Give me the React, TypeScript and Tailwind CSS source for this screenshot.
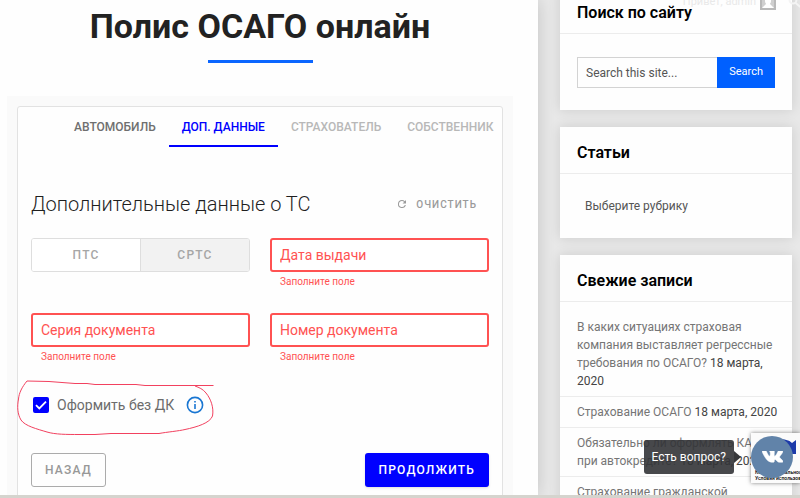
import { useState } from 'react'
import type { ReactNode } from 'react'

interface TabDef {
  id: string
  label: string
  disabled: boolean
}

const TABS: TabDef[] = [
  { id: 'car', label: 'Автомобиль', disabled: false },
  { id: 'extra', label: 'Доп. данные', disabled: false },
  { id: 'insurer', label: 'Страхователь', disabled: true },
  { id: 'owner', label: 'Собственник', disabled: true },
]

interface Post {
  title: string
  date: string
}

const POSTS: Post[] = [
  {
    title:
      'В каких ситуациях страховая компания выставляет регрессные требования по ОСАГО?',
    date: '18 марта, 2020',
  },
  { title: 'Страхование ОСАГО', date: '18 марта, 2020' },
  {
    title: 'Обязательно ли оформлять КАСКО при автокредите?',
    date: '18 марта, 2020',
  },
  { title: 'Страхование гражданской ответственности', date: '18 марта, 2020' },
]

function Field({ id, label }: { id: string; label: string }) {
  return (
    <div>
      <input
        id={id}
        aria-label={label}
        aria-describedby={`${id}-error`}
        placeholder={label}
        className="block h-[34px] w-full rounded-[3px] border-2 border-[#ff5252] bg-white px-2 text-sm text-[#ff5252] outline-none placeholder:text-[#ff5252]"
      />
      <p
        id={`${id}-error`}
        className="mt-1 px-2.5 text-[10px] leading-3 text-[#ff5252]"
      >
        Заполните поле
      </p>
    </div>
  )
}

function Widget({ title, children }: { title: string; children: ReactNode }) {
  return (
    <section className="bg-[#fefefe] shadow-[0_0_12px_rgba(0,0,0,0.12)]">
      <h2 className="border-b border-[#ececec] px-[17px] pt-3.5 pb-2 text-base leading-6 font-semibold text-black">
        {title}
      </h2>
      {children}
    </section>
  )
}

function Tabs() {
  const [active, setActive] = useState('extra')

  return (
    <div role="tablist" className="flex overflow-hidden pl-[43px]">
      {TABS.map((t) => {
        const isActive = active === t.id
        return (
          <button
            key={t.id}
            type="button"
            role="tab"
            aria-selected={isActive}
            disabled={t.disabled}
            onClick={() => setActive(t.id)}
            className={`h-10 shrink-0 border-b-2 px-[13px] pt-0.5 text-xs font-medium uppercase ${
              isActive
                ? 'border-[#0000ff] text-[#0000ff]'
                : t.disabled
                  ? 'border-transparent text-[#b8b8b8]'
                  : 'border-transparent text-[#6f6f6f]'
            }`}
          >
            {t.label}
          </button>
        )
      })}
    </div>
  )
}

function PolicyForm() {
  const [doc, setDoc] = useState('sts')
  const [noCard, setNoCard] = useState(true)

  return (
    <form
      className="min-h-[420px] rounded-[3px] border border-[#e2e2e2] bg-[#fefefe]"
      onSubmit={(e) => e.preventDefault()}
    >
      <Tabs />

      <div className="px-[13px]">
        <div className="mt-[45px] flex items-center justify-between pr-3">
          <h2 className="text-xl leading-6 font-light text-[#1f1f1f]">
            Дополнительные данные о ТС
          </h2>
          <button
            type="button"
            className="flex items-center gap-2 text-[10px] font-medium tracking-widest text-[#9a9a9a] uppercase"
          >
            <svg viewBox="0 0 24 24" className="size-3" aria-hidden>
              <path
                fill="currentColor"
                d="M17.65 6.35A7.96 7.96 0 0 0 12 4a8 8 0 1 0 7.73 10h-2.08A6 6 0 1 1 12 6c1.66 0 3.14.69 4.22 1.78L13 11h7V4z"
              />
            </svg>
            Очистить
          </button>
        </div>

        <div className="mt-[22px] grid grid-cols-2 gap-x-5 gap-y-[25px]">
          <div
            role="group"
            aria-label="Тип документа"
            className="flex h-[34px] overflow-hidden rounded-[3px] border border-[#dedede]"
          >
            <button
              type="button"
              aria-pressed={doc === 'pts'}
              onClick={() => setDoc('pts')}
              className={`flex-1 text-xs font-medium tracking-widest text-[#a6a6a6] ${
                doc === 'pts' ? 'bg-[#f2f2f2]' : 'bg-white'
              }`}
            >
              ПТС
            </button>
            <button
              type="button"
              aria-pressed={doc === 'sts'}
              onClick={() => setDoc('sts')}
              className={`flex-1 border-l border-[#dedede] text-xs font-medium tracking-widest text-[#a6a6a6] ${
                doc === 'sts' ? 'bg-[#f2f2f2]' : 'bg-white'
              }`}
            >
              СРТС
            </button>
          </div>
          <Field id="issued" label="Дата выдачи" />
          <Field id="series" label="Серия документа" />
          <Field id="number" label="Номер документа" />
        </div>

        <div className="relative mt-[30px] flex items-center gap-3">
          <label className="flex h-6 items-center gap-2 pl-0.5 text-sm text-[#6c6c6c]">
            <span className="relative flex size-4">
              <input
                type="checkbox"
                checked={noCard}
                onChange={(e) => setNoCard(e.target.checked)}
                className="size-4 appearance-none rounded-[2px] border-2 border-[#0000ff] checked:bg-[#0000ff]"
              />
              {noCard && (
                <svg
                  viewBox="0 0 16 16"
                  className="pointer-events-none absolute inset-0"
                  aria-hidden
                >
                  <path
                    d="M3 8.2 6.3 11.5 13 4.6"
                    fill="none"
                    stroke="#fff"
                    strokeWidth="1.8"
                  />
                </svg>
              )}
            </span>
            Оформить без ДК
          </label>
          <button type="button" aria-label="Подробнее">
            <svg viewBox="0 0 18 18" className="size-[18px]" aria-hidden>
              <circle
                cx="9"
                cy="9"
                r="7.6"
                fill="none"
                stroke="#1976d2"
                strokeWidth="1.6"
              />
              <path d="M8.2 8h1.6v5H8.2zM8.2 5h1.6v1.6H8.2z" fill="#1976d2" />
            </svg>
          </button>
          {/* hand-drawn marker loop around the option */}
          <svg
            viewBox="0 0 198 56"
            className="pointer-events-none absolute -top-[13px] -left-[14px] h-14 w-[198px]"
            aria-hidden
          >
            <path
              d="M196.5 5.5H128L119 4.5H78L70 3.5H58L32 1.5 10 1C5 7 2 13 1.5 19 0 27 .5 34 4 40 8 46 20 49 30 52 38 54.5 50 54.5 62 54.5H78L94 53.5H142C150 52 162 51 168 49.5 180 47 193 43 195.5 36 197 28 194 19 189 13 186 9 182 7.5 178 6"
              fill="none"
              stroke="#f2415f"
              strokeWidth="1"
            />
          </svg>
        </div>

        <div className="mt-9 flex justify-between">
          <button
            type="button"
            className="h-[34px] rounded-[3px] border border-[#ababab] px-[13px] text-xs font-medium tracking-widest text-[#989898] uppercase"
          >
            Назад
          </button>
          <button
            type="submit"
            className="h-[34px] rounded-[3px] bg-[#0000ff] px-3.5 text-xs font-medium tracking-widest text-white uppercase shadow"
          >
            Продолжить
          </button>
        </div>
      </div>
    </form>
  )
}

function Sidebar() {
  return (
    <aside className="-mt-[13px] w-[232px] shrink-0 space-y-[17px]">
      <Widget title="Поиск по сайту">
        <form
          className="flex px-[17px] pt-[23px] pb-[22px]"
          onSubmit={(e) => e.preventDefault()}
        >
          <input
            type="search"
            aria-label="Поиск по сайту"
            placeholder="Search this site..."
            className="h-[31px] min-w-0 flex-1 border border-r-0 border-[#d3d3d3] px-2 text-xs text-[#555] outline-none placeholder:text-[#555]"
          />
          <button
            type="submit"
            className="h-[31px] bg-[#0060ff] px-3 text-[11px] text-white"
          >
            Search
          </button>
        </form>
      </Widget>

      <Widget title="Статьи">
        <div className="px-[17px] py-5">
          <select
            aria-label="Статьи"
            className="block h-6 w-full appearance-none bg-transparent pl-2 text-xs text-[#555]"
          >
            <option>Выберите рубрику</option>
          </select>
        </div>
      </Widget>

      <Widget title="Свежие записи">
        <ul className="pt-2.5">
          {POSTS.map((p) => (
            <li
              key={p.title}
              className="border-b border-[#ececec] py-1.5 pr-3 pl-[17px] text-xs leading-[18px] text-[#444]"
            >
              <a href="#post" className="text-[#757575]">
                {p.title}
              </a>{' '}
              {p.date}
            </li>
          ))}
        </ul>
      </Widget>
    </aside>
  )
}

function AdminBar() {
  return (
    <div className="absolute -top-1.5 right-0 flex h-4 items-center gap-1 text-[#e9e9e9]">
      <span className="text-[11px] leading-4">Привет, admin</span>
      <svg viewBox="0 0 16 16" className="size-4" aria-hidden>
        <path d="M0 0h16v16H0z" fill="#b9b9b9" />
        <path d="M2 1h12v13H2z" fill="#cfcfcf" />
        <path
          d="M5 3a3 3 0 0 1 6 0v4c0 2-1 2-1 3l4 4H2l4-4c0-1-1-1-1-3z"
          fill="#fff"
        />
      </svg>
      <svg viewBox="0 0 12 16" className="ml-2 h-4 w-3" aria-hidden>
        <circle cx="5" cy="6" r="3.5" fill="none" stroke="#f4f4f4" strokeWidth="2" />
        <path d="m7.5 9 5 4" stroke="#f4f4f4" strokeWidth="2" />
      </svg>
    </div>
  )
}

function ChatWidget() {
  return (
    <>
      <div className="absolute right-0 bottom-[15px] h-[50px] w-[49px] overflow-hidden bg-[#fbfbfb] shadow-[0_0_4px_rgba(0,0,0,0.5)]">
        <svg viewBox="0 0 49 50" className="absolute inset-0" aria-hidden>
          <path
            d="M26 6c8 0 12 1 15 4l4-3v14H32l4-4c-3-4-6-5-10-5z"
            fill="#1c3aa9"
          />
        </svg>
        <div className="absolute bottom-0.5 left-1 text-[5px] leading-[6px] font-medium whitespace-nowrap text-black">
          <p>Конфиденциальность</p>
          <p>Условия использования</p>
        </div>
      </div>
      <div className="absolute right-[7px] bottom-5 flex items-center">
        <div className="rounded-[3px] bg-[#333437]/90 px-2 py-[9px] text-xs leading-4 text-white">
          Есть вопрос?
        </div>
        <svg viewBox="0 0 7 12" className="mr-2.5 h-3 w-[7px]" aria-hidden>
          <path d="M0 0 7 6 0 12z" fill="#37383b" />
        </svg>
        <button
          type="button"
          aria-label="ВКонтакте"
          className="flex size-[42px] items-center justify-center rounded-full bg-[#6183a9]"
        >
          <svg viewBox="0 6 24 12" className="h-3 w-[21px]" aria-hidden>
            <path
              fill="#fff"
              stroke="#fff"
              strokeWidth="0.6"
              d="M13.162 17.994c.609 0 .858-.406.851-.915-.031-1.917.714-2.949 2.059-1.604 1.488 1.488 1.796 2.519 3.603 2.519h3.2c.808 0 1.126-.26 1.126-.668 0-.863-1.421-2.386-2.625-3.504-1.686-1.565-1.765-1.602-.313-3.486 1.801-2.339 4.157-5.336 2.073-5.336h-3.981c-.772 0-.828.435-1.103 1.083-.995 2.347-2.886 5.387-3.604 4.922-.751-.485-.407-2.406-.35-5.261.015-.754.011-1.271-1.141-1.539-.629-.145-1.241-.205-1.809-.205-2.273 0-3.841.953-2.95 1.119 1.571.293 1.42 3.692 1.054 5.16-.638 2.556-3.036-2.024-4.035-4.305-.241-.548-.315-.974-1.175-.974H.787c-.492 0-.787.16-.787.516 0 .602 2.96 6.72 5.786 9.77 2.756 2.975 5.48 2.708 7.376 2.708z"
            />
          </svg>
        </button>
      </div>
    </>
  )
}

export default function App() {
  return (
    <div className="relative flex h-screen flex-col overflow-hidden bg-[#e8e8e8] font-[Roboto,sans-serif]">
      <div className="flex min-h-0 flex-1 gap-[22px] overflow-hidden pr-2">
        <main className="min-w-0 flex-1 bg-[#fefefe] pr-[25px] pl-[7px] shadow-[0_0_16px_rgba(0,0,0,0.16)]">
          <h1 className="pt-1.5 text-center text-[34px] leading-10 font-bold text-[#222]">
            Полис ОСАГО онлайн
          </h1>
          <div className="mx-auto mt-3.5 h-[3px] w-[105px] bg-[#0b66ff]" />
          <div className="mt-[33px] bg-[#fafafa] p-2.5">
            <PolicyForm />
          </div>
        </main>
        <Sidebar />
      </div>
      <div className="h-[3px] shrink-0 bg-[#d5d4ce]" />
      <AdminBar />
      <ChatWidget />
    </div>
  )
}
